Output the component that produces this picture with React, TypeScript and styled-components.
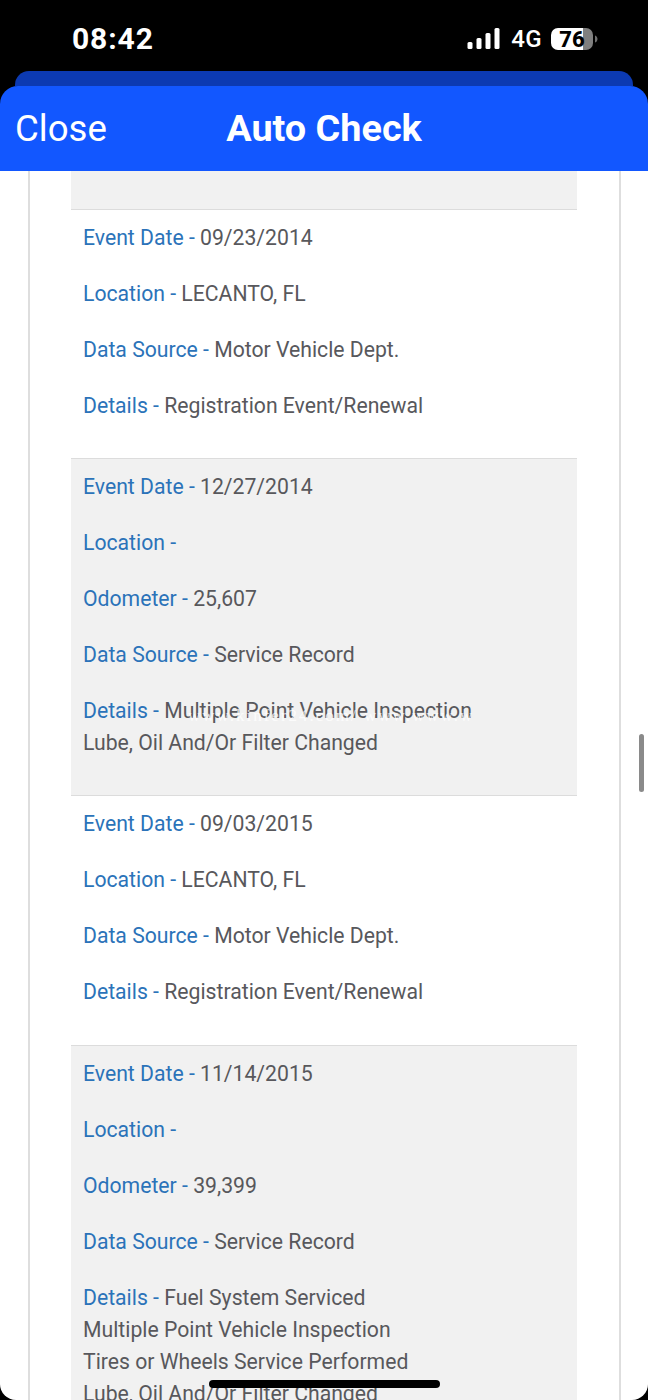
import React from "react";
import styled, { createGlobalStyle } from "styled-components";

const Global = createGlobalStyle`
  html, body { margin: 0; padding: 0; background: #000; }
  * { box-sizing: border-box; }
`;

const Screen = styled.div`
  position: relative;
  width: 648px;
  height: 1400px;
  overflow: hidden;
  background: #000;
  display: flex;
  flex-direction: column;
  font-family: Roboto, "Liberation Sans", sans-serif;
`;

const StatusBar = styled.div`
  height: 71px;
  flex: none;
  display: flex;
  align-items: center;
  padding: 6px 0 0 72px;
  color: #fff;
`;

const Clock = styled.div`
  font-size: 30px;
  font-weight: 700;
  letter-spacing: 0.9px;
  line-height: 32px;
`;

const StatusIcons = styled.div`
  margin-left: auto;
  margin-right: 50px;
  display: flex;
  align-items: center;
`;

const Network = styled.span`
  font-size: 24px;
  font-weight: 500;
  margin: 0 9px 0 10px;
  letter-spacing: 0.4px;
`;

const BackSheet = styled.div`
  height: 15px;
  flex: none;
  margin: 0 15px;
  background: #0c3ab2;
  border-radius: 14px 14px 0 0;
`;

const Header = styled.header`
  height: 85px;
  flex: none;
  background: #1257ff;
  border-radius: 18px 18px 0 0;
  display: grid;
  grid-template-columns: 1fr auto 1fr;
  align-items: center;
  padding: 0 15px;
  color: #fff;
`;

const CloseLabel = styled.span`
  font-size: 36.6px;
  font-weight: 400;
  line-height: 85px;
`;

const Title = styled.h1`
  margin: 0;
  font-size: 37.8px;
  font-weight: 700;
  line-height: 85px;
`;

const Body = styled.main`
  flex: 1;
  min-height: 0;
  background: #fff;
  border-radius: 0 0 16px 16px;
  overflow: hidden;
  padding: 0 27px 0 28px;
`;

const Card = styled.div`
  height: 100%;
  border-left: 2px solid #dedede;
  border-right: 2px solid #dedede;
  padding: 0 42px 0 41px;
  overflow: hidden;
`;

const Spacer = styled.div`
  height: 37.6px;
  background: #f1f1f1;
`;

const Row = styled.section<{ $shaded?: boolean }>`
  background: ${(p) => (p.$shaded ? "#f1f1f1" : "#fff")};
  border-top: 1px solid #dcdcdc;
  padding: 12px 12px 12.4px 12px;
`;

const Field = styled.p`
  margin: 0 0 24px;
  font-size: 21.2px;
  line-height: 32px;
  color: #58585c;
`;

const Label = styled.span`
  color: #2b73b9;
`;

const Watermark = styled.div`
  position: absolute;
  left: 188px;
  top: 706px;
  font-family: "Liberation Serif", serif;
  font-size: 17px;
  letter-spacing: 2px;
  line-height: 20px;
  color: rgba(255, 255, 255, 0.8);
  white-space: nowrap;
`;

const ScrollThumb = styled.div`
  position: absolute;
  left: 639px;
  top: 734px;
  width: 4.5px;
  height: 58px;
  border-radius: 3px;
  background: #8a8a8a;
`;

const HomeIndicator = styled.div`
  position: absolute;
  left: 209px;
  top: 1380px;
  width: 231px;
  height: 8px;
  border-radius: 4px;
  background: #000;
`;

const Signal = () => (
  <svg width="34" height="22" viewBox="0 0 33 22" fill="#fff">
    <rect x="0" y="14" width="5" height="7" rx="1.5" />
    <rect x="9" y="10" width="5" height="11" rx="1.5" />
    <rect x="18" y="5" width="5" height="16" rx="1.5" />
    <rect x="27" y="0" width="5" height="21" rx="1.5" />
  </svg>
);

const Battery = () => (
  <svg width="47" height="24" viewBox="0 0 47 24">
    <defs>
      <clipPath id="batBody">
        <rect x="0" y="1" width="42" height="22" rx="7" />
      </clipPath>
    </defs>
    <g clipPath="url(#batBody)">
      <rect x="0" y="1" width="32" height="22" fill="#fff" />
      <rect x="32" y="1" width="10" height="22" fill="#7f7f7f" />
    </g>
    <path d="M44 8.5c1.6.5 2.5 2 2.5 3.5s-.9 3-2.5 3.5z" fill="#6f6f6f" />
    <text x="21" y="20" textAnchor="middle" fontFamily="Roboto, sans-serif" fontWeight="800" fontSize="22" fill="#000">76</text>
  </svg>
);

type F = { label: string; value?: string; more?: string[] };
type R = { shaded?: boolean; fields: F[] };

const rows: R[] = [
  {
    fields: [
      { label: "Event Date", value: "09/23/2014" },
      { label: "Location", value: "LECANTO, FL" },
      { label: "Data Source", value: "Motor Vehicle Dept." },
      { label: "Details", value: "Registration Event/Renewal" },
    ],
  },
  {
    shaded: true,
    fields: [
      { label: "Event Date", value: "12/27/2014" },
      { label: "Location" },
      { label: "Odometer", value: "25,607" },
      { label: "Data Source", value: "Service Record" },
      { label: "Details", value: "Multiple Point Vehicle Inspection", more: ["Lube, Oil And/Or Filter Changed"] },
    ],
  },
  {
    fields: [
      { label: "Event Date", value: "09/03/2015" },
      { label: "Location", value: "LECANTO, FL" },
      { label: "Data Source", value: "Motor Vehicle Dept." },
      { label: "Details", value: "Registration Event/Renewal" },
    ],
  },
  {
    shaded: true,
    fields: [
      { label: "Event Date", value: "11/14/2015" },
      { label: "Location" },
      { label: "Odometer", value: "39,399" },
      { label: "Data Source", value: "Service Record" },
      {
        label: "Details",
        value: "Fuel System Serviced",
        more: ["Multiple Point Vehicle Inspection", "Tires or Wheels Service Performed", "Lube, Oil And/Or Filter Changed"],
      },
    ],
  },
];

export default function App() {
  return (
    <Screen>
      <Global />
      <StatusBar>
        <Clock>08:42</Clock>
        <StatusIcons>
          <Signal />
          <Network>4G</Network>
          <Battery />
        </StatusIcons>
      </StatusBar>
      <BackSheet />
      <Header>
        <CloseLabel>Close</CloseLabel>
        <Title>Auto Check</Title>
        <span />
      </Header>
      <Body>
        <Card>
          <Spacer />
          {rows.map((r, i) => (
            <Row key={i} $shaded={r.shaded}>
              {r.fields.map((f) => (
                <Field key={f.label}>
                  <Label>{f.label} - </Label>
                  {f.value}
                  {f.more?.map((m) => (
                    <React.Fragment key={m}>
                      <br />
                      {m}
                    </React.Fragment>
                  ))}
                </Field>
              ))}
            </Row>
          ))}
        </Card>
      </Body>
      <Watermark>www.kinfer24.com/ www.www.w</Watermark>
      <ScrollThumb />
      <HomeIndicator />
    </Screen>
  );
}
